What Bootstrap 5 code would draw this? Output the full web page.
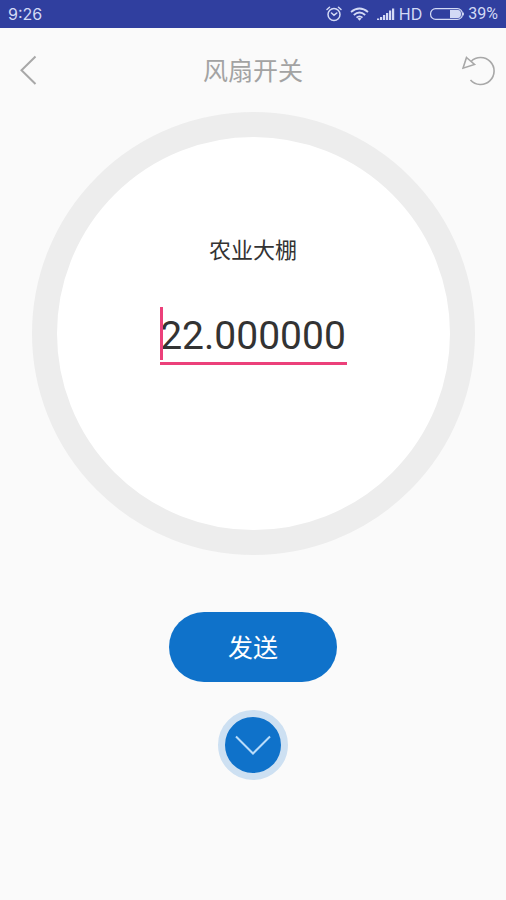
<!DOCTYPE html>
<html lang="zh-CN">
<head>
<meta charset="utf-8">
<meta name="viewport" content="width=device-width, initial-scale=1">
<title>风扇开关</title>
<link href="https://cdn.jsdelivr.net/npm/bootstrap@5.3.0/dist/css/bootstrap.min.css" rel="stylesheet">
<style>
  body { background: #fafafa; font-family: Roboto, "Noto Sans CJK SC", sans-serif; color: #333; }
  .status-bar { height: 28px; background: #303f9f; color: #d3daf5; font-family: Inter, sans-serif; font-size: 16px; line-height: 28px; padding: 0 8px; }
  .status-bar svg { display: block; }
  .battery-text { font-family: Roboto, sans-serif; }
  .app-bar { height: 84px; padding: 0 8px 0 12px; }
  .app-title { font-size: 25px; line-height: 36px; padding-top: 4px; color: #a3a3a3; font-weight: 400; }
  .icon-btn { line-height: 0; }
  .dial { width: calc(100% - 63px); max-width: 480px; aspect-ratio: 1; border: 25px solid #ededed; padding-top: 96px; }
  .dial-label { font-size: 22px; line-height: 36px; }
  .value-field { width: 187px; margin-top: 38px; }
  .value-field input { height: 58px; padding: 2px 0 0; border-bottom: 3px solid #ec407a; color: #333; font-size: 39px; line-height: 53px; outline: 0; }
  .caret { left: 0; top: 0; width: 3px; height: 53px; background: #ec407a; }
  .send-btn { width: 168px; height: 70px; margin-top: 57px; padding: 4px 0 0; background: #0f72ca; color: #fff; font-size: 25px; line-height: 36px; }
  .send-btn:hover, .send-btn:active { background: #0c62af !important; color: #fff !important; }
  .more-btn { width: 70px; height: 70px; margin-top: 28px; border: 7px solid #cde0f2; background: #0f72ca; line-height: 0; }
</style>
</head>
<body>
<div class="status-bar d-flex justify-content-between align-items-center">
  <span>9:26</span>
  <div class="d-flex align-items-center">
    <svg class="me-2" width="16" height="16" viewBox="0 0 16 16" fill="none" stroke="currentColor" stroke-width="1.500" stroke-linecap="round" aria-hidden="true"><circle cx="8" cy="8.500" r="6"/><path d="M1 3.500 3.500 1.200M15 3.500 12.500 1.200M5.500 7 8 9.200 10.800 7"/></svg>
    <svg class="me-2" width="19" height="14" viewBox="0 0 19 14" fill="none" stroke="currentColor" stroke-width="1.800" aria-hidden="true"><path d="M1 5Q9.500-2 18 5M3.800 8Q9.500 3 15.200 8M6.500 10.700Q9.500 8 12.500 10.700"/><path d="M7.500 11.500 9.500 13.800 11.500 11.500Q9.500 10 7.500 11.500z" fill="currentColor" stroke="none"/></svg>
    <svg class="me-1" width="18" height="12" viewBox="0 0 18 12" fill="currentColor" aria-hidden="true"><path d="M0 10.500h2.200V12H0zM3 9h2.200v3H3zM6 7h2.200v5H6zM9 5h2.200v7H9zM12 2.500h2.200V12H12zM15 .500h2.200V12H15z"/></svg>
    <span class="me-2">HD</span>
    <svg class="me-1" width="34" height="12" viewBox="0 0 34 12" aria-hidden="true"><rect x=".6" y=".6" width="31.800" height="10.800" rx="5" fill="none" stroke="currentColor" stroke-width="1.200"/><path d="M20 2h8q3 0 3 4t-3 4h-8zM33 4q2 2 0 4z" fill="currentColor"/></svg>
    <span class="battery-text">39%</span>
  </div>
</div>
<header class="app-bar d-flex justify-content-between align-items-center">
  <button type="button" class="icon-btn btn p-0 border-0" aria-label="返回">
    <svg width="32" height="32" viewBox="0 0 32 32" fill="none" stroke="#a8a8a8" stroke-width="2"><path d="M23.500 2.500 9.500 16.200 23.500 30"/></svg>
  </button>
  <h1 class="app-title m-0">风扇开关</h1>
  <button type="button" class="icon-btn btn p-0 border-0" aria-label="刷新">
    <svg width="36" height="32" viewBox="0 0 36 32" fill="none" stroke="#a8a8a8" stroke-width="1.600"><path d="M9 7.500A13.500 13.500 0 1 1 8.500 26M4.500 3.500 12.500 10.500 1 14.200z"/></svg>
  </button>
</header>
<main class="d-flex flex-column align-items-center">
  <section class="dial rounded-circle bg-white d-flex flex-column align-items-center">
    <label class="dial-label" for="dial-value">农业大棚</label>
    <div class="value-field position-relative">
      <input id="dial-value" class="w-100 border-top-0 border-start-0 border-end-0 bg-transparent text-center" type="text" inputmode="decimal" value="22.000000">
      <span class="caret position-absolute"></span>
    </div>
  </section>
  <button type="button" class="send-btn btn border-0 rounded-pill">发送</button>
  <button type="button" class="more-btn btn rounded-circle p-0 d-flex align-items-center justify-content-center" aria-label="展开">
    <svg width="38" height="20" viewBox="0 0 38 20" fill="none" stroke="#b9dcfa" stroke-width="2"><path d="M2 1.500 19 18.500 36 1.500"/></svg>
  </button>
</main>
<script src="https://cdn.jsdelivr.net/npm/bootstrap@5.3.0/dist/js/bootstrap.bundle.min.js"></script>
</body>
</html>
